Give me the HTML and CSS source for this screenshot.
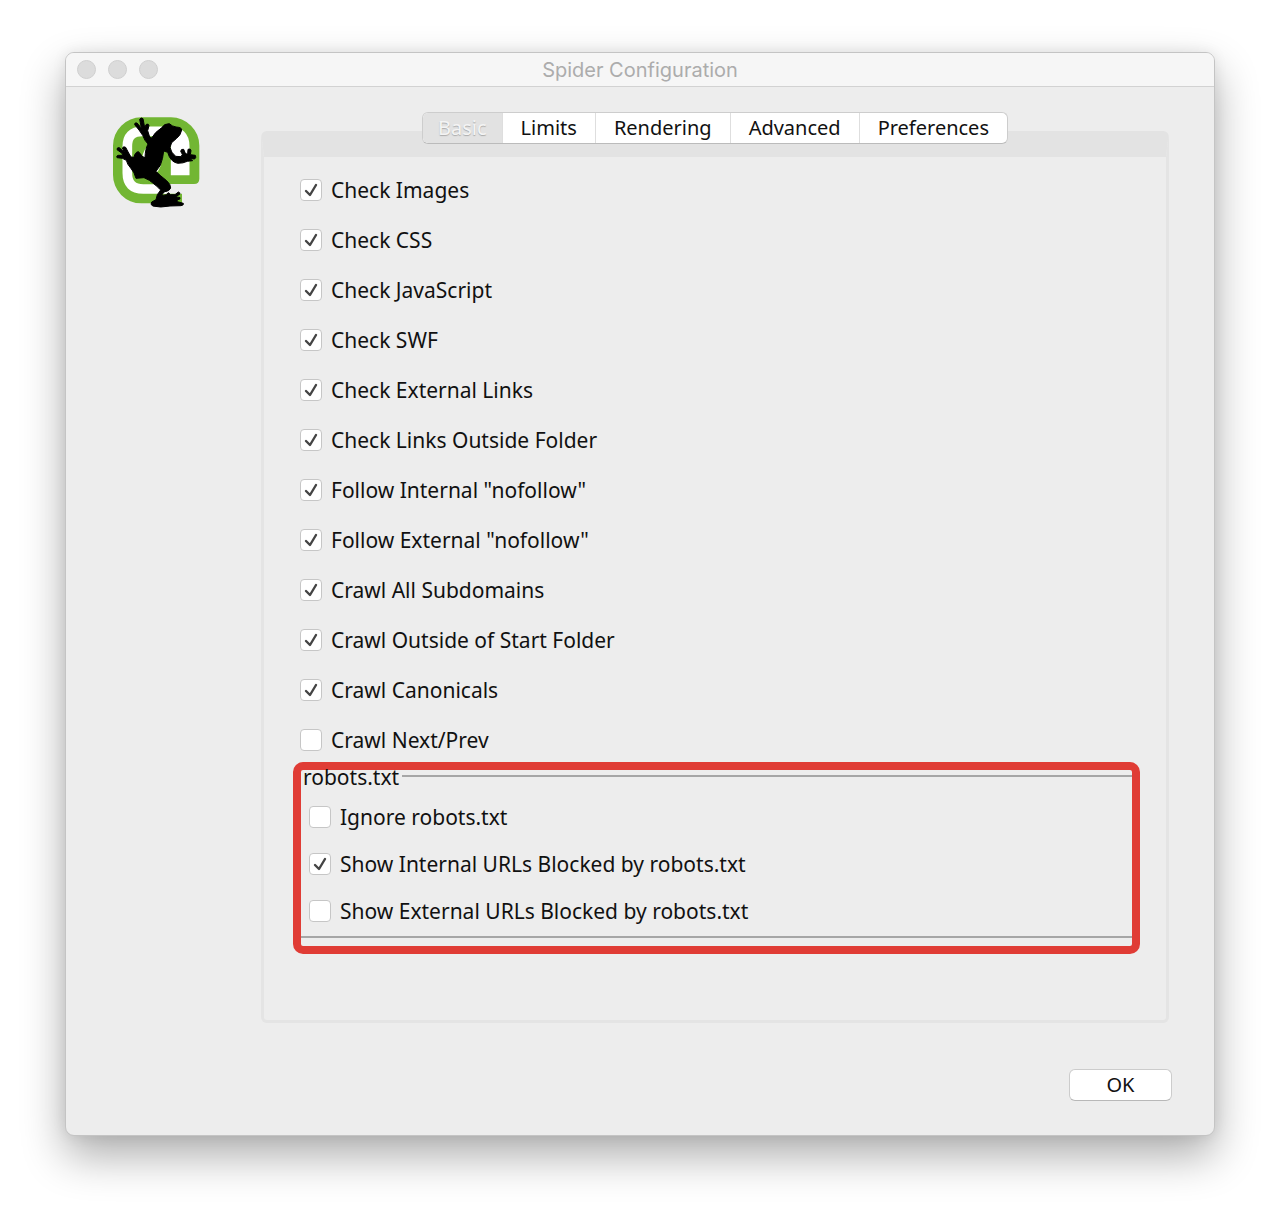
FILE: index.html
```
<!DOCTYPE html>
<html lang="en">
<head>
<meta charset="UTF-8">
<meta name="viewport" content="width=device-width, initial-scale=1.0">
<title>Spider Configuration</title>
<link rel="stylesheet" href="styles.css">
</head>
<body>

<div class="window">
    <!-- Title bar -->
    <header class="titlebar">
        <div class="lights">
            <button class="light" type="button" aria-label="Close"></button>
            <button class="light" type="button" aria-label="Minimize"></button>
            <button class="light" type="button" aria-label="Zoom"></button>
        </div>
        <h1 class="title">Spider Configuration</h1>
    </header>

    <main class="content">
        <svg class="logo" viewBox="36 34 264 276" aria-hidden="true">
            <path fill="#72b633" d="M124 38H213A85 85 0 0 1 298 123V222Q298 238 282 238H190V267H246V296H124A85 85 0 0 1 39 210V123A85 85 0 0 1 124 38Z"/>
            <path fill="none" stroke="#fff" stroke-width="29" d="M198 253H130Q82 253 82 205V125Q82 80 127 80H207Q254 80 254 125V197H227V100"/>
            <ellipse cx="155" cy="166" rx="29" ry="44" fill="#fff"/>
            <path fill="#000" stroke="#000" stroke-width="3" stroke-linejoin="round" d="M184 70Q193 56 208 57Q216 65 228 67Q246 68 245 76Q242 92 230 101L215 114L210 128Q213 144 227 155L243 156L247 149L242 140Q243 132 251 134L257 148L263 147L264 134Q272 130 273 138L271 150L286 152Q290 158 284 163L270 162L278 168L262 170Q250 176 233 176Q211 172 203 143L191 139Q189 162 181 182L168 200Q177 210 200 228Q213 240 212 250Q210 259 192 262L184 273L200 270L205 264L212 270L225 270L235 262Q242 264 239 269L227 276L240 279Q243 284 231 286L232 291L250 296Q252 302 243 303L210 304Q180 310 158 304Q150 299 155 292L168 285L172 270L182 256Q172 245 148 227L132 219L108 221Q104 204 92 190Q82 180 79 167L67 161L51 159Q48 153 55 152L68 152L66 146L51 135Q50 128 58 129L73 143L67 130Q71 124 77 128L86 145L93 157L102 158Q105 142 115 141Q122 146 126 155L135 159Q136 132 144 118L135 107L128 92L117 76L104 60Q103 53 111 55L124 70L119 44Q123 37 129 42L134 68L139 59Q146 56 147 63L143 78L149 97L155 100Q165 82 184 70Z"/>
        </svg>

        <section class="settings">
            <!-- Tabs sit over the top edge of the panel -->
            <nav class="tabs" role="tablist">
                <button class="tab active" type="button" role="tab" aria-selected="true">Basic</button>
                <button class="tab" type="button" role="tab">Limits</button>
                <button class="tab" type="button" role="tab">Rendering</button>
                <button class="tab" type="button" role="tab">Advanced</button>
                <button class="tab" type="button" role="tab">Preferences</button>
            </nav>

            <div class="panel">
                <div class="options">
                    <label class="option"><input type="checkbox" checked>Check Images</label>
                    <label class="option"><input type="checkbox" checked>Check CSS</label>
                    <label class="option"><input type="checkbox" checked>Check JavaScript</label>
                    <label class="option"><input type="checkbox" checked>Check SWF</label>
                    <label class="option"><input type="checkbox" checked>Check External Links</label>
                    <label class="option"><input type="checkbox" checked>Check Links Outside Folder</label>
                    <label class="option"><input type="checkbox" checked>Follow Internal "nofollow"</label>
                    <label class="option"><input type="checkbox" checked>Follow External "nofollow"</label>
                    <label class="option"><input type="checkbox" checked>Crawl All Subdomains</label>
                    <label class="option"><input type="checkbox" checked>Crawl Outside of Start Folder</label>
                    <label class="option"><input type="checkbox" checked>Crawl Canonicals</label>
                    <label class="option"><input type="checkbox">Crawl Next/Prev</label>
                </div>

                <!-- Robots group with the red marker around it -->
                <div class="highlight">
                    <fieldset class="robots">
                        <legend>robots.txt</legend>
                        <label class="option"><input type="checkbox">Ignore robots.txt</label>
                        <label class="option"><input type="checkbox" checked>Show Internal URLs Blocked by robots.txt</label>
                        <label class="option"><input type="checkbox">Show External URLs Blocked by robots.txt</label>
                    </fieldset>
                </div>
            </div>
        </section>
    </main>

    <footer class="actions">
        <button class="ok-btn" type="button">OK</button>
    </footer>
</div>

</body>
</html>
```
FILE: styles.css
```
* {
    box-sizing: border-box;
}

body {
    margin: 0;
    padding: 52px 65px 77px;
    background-color: #fff;
    color: #111;
    font-family: "Noto Sans", "Open Sans", sans-serif;
    font-size: 21px;
}

button {
    font: inherit;
    font-size: 20px;
    color: inherit;
}

/* Window */
.window {
    background-color: #ededed;
    border: 1px solid #c4c4c4;
    border-radius: 9px;
    box-shadow: 0 20px 44px rgba(0, 0, 0, 0.32), 0 0 14px rgba(0, 0, 0, 0.08);
}

.titlebar {
    display: grid;
    grid-template-columns: 1fr auto 1fr;
    align-items: center;
    height: 34px;
    padding: 0 11px;
    background-color: #f6f6f6;
    border-bottom: 1px solid #d2d2d2;
    border-radius: 8px 8px 0 0;
}

.lights {
    display: flex;
    gap: 12px;
}

.light {
    width: 19px;
    height: 19px;
    padding: 0;
    background-color: #dcdcdc;
    border: 1px solid #d0d0d0;
    border-radius: 50%;
}

.title {
    margin: 0;
    color: #acacac;
    font-family: Inter, sans-serif;
    font-size: 20px;
    font-weight: 400;
    line-height: 24px;
}

.content {
    display: flex;
    align-items: flex-start;
    gap: 61px;
    padding: 25px 45px 0 46px;
}

.logo {
    flex: none;
    width: 88px;
    height: 92px;
    margin-top: 4px;
}

.settings {
    flex: 1;
    display: flex;
    flex-direction: column;
}

/* Tabs */
.tabs {
    z-index: 1;
    align-self: center;
    display: flex;
    height: 32px;
    margin-bottom: -13px;
    background-color: #fff;
    border: 1px solid #cdcdcd;
    border-bottom-color: #bbb;
    border-radius: 6px;
    overflow: hidden;
}

.tab {
    padding: 0 18px;
    background: none;
    border: 0;
    border-left: 1px solid #dedede;
    line-height: 30px;
}

.tab.active {
    padding: 0 15px;
    background-color: #e2e2e2;
    border-left: 0;
    color: #f4f4f4;
    text-shadow: 0 1px 1px #aaa;
}

/* Panel */
.panel {
    padding: 21px 26px 66px 29px;
    border: 3px solid #e4e4e4;
    border-top: 26px solid #e3e3e3;
    border-radius: 6px;
}

.options {
    display: flex;
    flex-direction: column;
    gap: 26px;
    padding-left: 7px;
}

.option {
    display: flex;
    align-items: center;
    gap: 9px;
    line-height: 24px;
}

input[type="checkbox"] {
    appearance: none;
    width: 22px;
    height: 22px;
    margin: 0;
    background-color: #fff;
    border: 1px solid #c6c6c6;
    border-radius: 4px;
}

input[type="checkbox"]:checked {
    background-image: url("data:image/svg+xml,%3Csvg xmlns='http://www.w3.org/2000/svg' viewBox='0 0 20 20'%3E%3Cpath d='M5 11l4 4 6-10' fill='none' stroke='%23444' stroke-width='2.4' stroke-linecap='round' stroke-linejoin='round'/%3E%3C/svg%3E");
}

/* Robots group */
.highlight {
    margin-top: 10px;
    padding-bottom: 8px;
    border: 8px solid #e03c35;
    border-radius: 10px;
}

.robots {
    display: flex;
    flex-direction: column;
    gap: 23px;
    margin: 0;
    padding: 23px 8px 13px;
    border: 0 solid #a6a6a6;
    border-width: 2px 0;
}

.robots legend {
    padding: 2px 3px 0 2px;
    margin-left: -8px;
    line-height: 10px;
}

/* Buttons */
.actions {
    display: flex;
    justify-content: flex-end;
    padding: 46px 42px 34px;
}

.ok-btn {
    width: 103px;
    height: 32px;
    padding: 0;
    background-color: #fff;
    border: 1px solid #ccc;
    border-bottom-color: #b8b8b8;
    border-radius: 6px;
    line-height: 28px;
}
```
